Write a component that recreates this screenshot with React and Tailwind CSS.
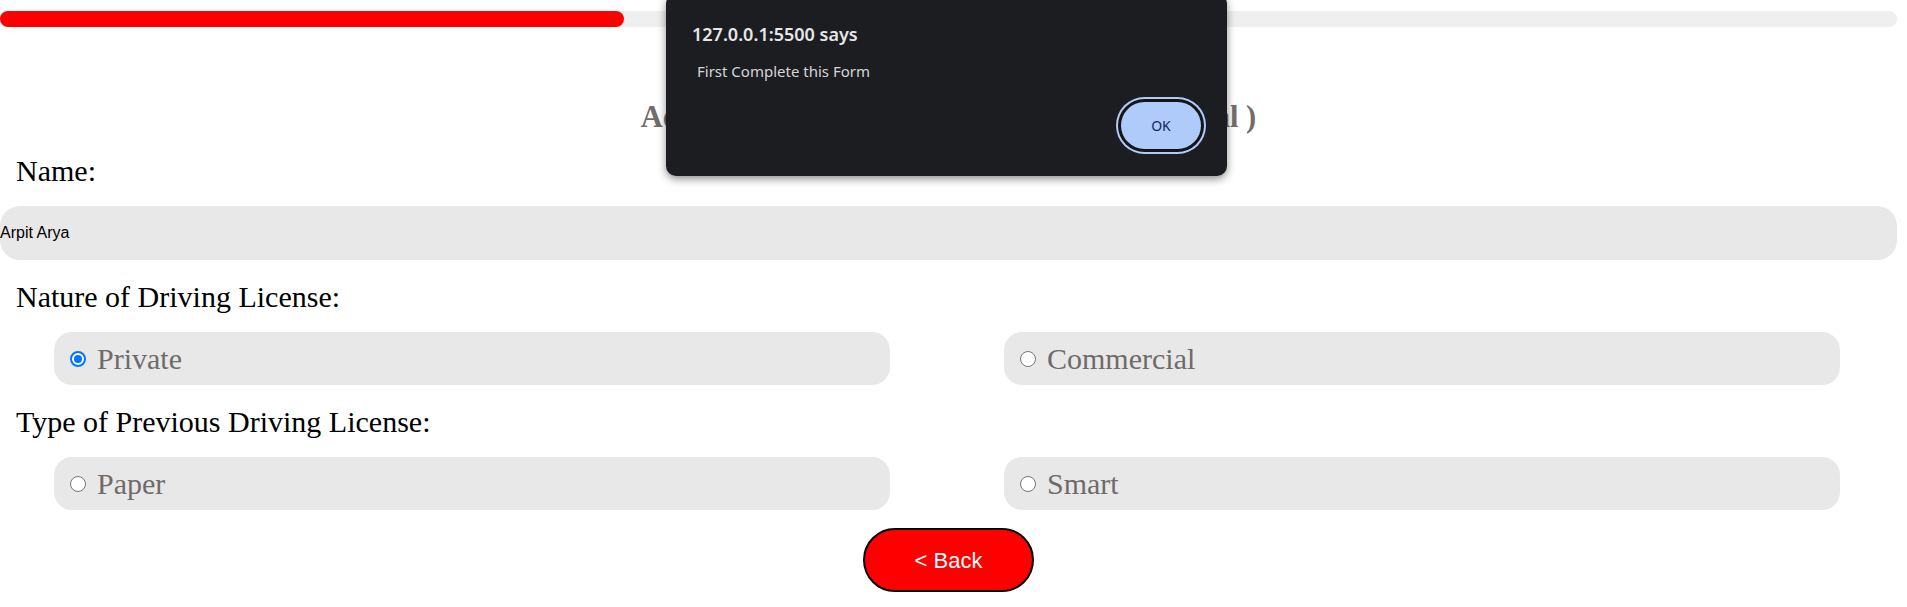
import React from "react";

const serif = { fontFamily: '"Liberation Serif", "Times New Roman", serif' };

const Radio = ({ checked }) =>
    checked ? (
        <span className="flex items-center justify-center w-4 h-4 rounded-full border-2 border-[#0075ff] bg-white shrink-0">
            <span className="w-2 h-2 rounded-full bg-[#0075ff]"></span>
        </span>
    ) : (
        <span className="w-4 h-4 rounded-full border border-[#767676] bg-white shrink-0"></span>
    );

const Option = ({ label, checked }) => (
    <div className="w-[836px] h-[53px] rounded-[18px] bg-[#e8e8e8] flex items-center pl-4 gap-[11px]">
        <Radio checked={checked} />
        <span className="text-[30px] leading-[34px] text-[#6f6b6a]">{label}</span>
    </div>
);

const App = () => {
    return (
        <div className="relative w-[1897px] min-h-[607px] bg-white" style={serif}>
            {/* progress */}
            <div className="pt-[11px]">
                <div className="h-4 w-full rounded-full bg-[#efefef]">
                    <div className="h-4 w-[624px] rounded-full bg-[#ff0000]"></div>
                </div>
            </div>

            <h2 className="mt-[73px] text-center text-[30.5px] leading-[34px] font-bold text-[#726c6a]">
                Address Change of Driving License ( Renewal )
            </h2>

            <div className="mt-5 px-4 text-[30px] leading-[34px] text-black">Name:</div>
            <input
                readOnly
                defaultValue="Arpit Arya"
                className="mt-[18px] block w-full h-[54px] rounded-[20px] bg-[#e8e8e8] px-0 text-[16px] text-black outline-none"
                style={{ fontFamily: '"Liberation Sans", Arial, sans-serif' }}
            />

            <div className="mt-5 px-4 text-[30px] leading-[34px] text-black">Nature of Driving License:</div>
            <div className="mt-[18px] flex pl-[54px] gap-[114px]">
                <Option label="Private" checked />
                <Option label="Commercial" />
            </div>

            <div className="mt-5 px-4 text-[30px] leading-[34px] text-black">Type of Previous Driving License:</div>
            <div className="mt-[18px] flex pl-[54px] gap-[114px]">
                <Option label="Paper" />
                <Option label="Smart" />
            </div>

            <div className="mt-[18px] flex justify-center">
                <button
                    className="w-[171px] h-16 rounded-full border-2 border-black bg-[#ff0000] text-white text-[22px]"
                    style={{ fontFamily: '"Liberation Sans", Arial, sans-serif' }}
                >
                    &lt; Back
                </button>
            </div>

            {/* browser alert */}
            <div
                className="absolute left-[666px] top-[-6px] w-[561px] h-[182px] rounded-[10px] bg-[#1c1d21] shadow-[0_3px_8px_rgba(0,0,0,0.45)] flex flex-col pt-7 px-[26px]"
                style={{ fontFamily: '"Noto Sans", "Open Sans", sans-serif' }}
            >
                <div className="text-[18px] leading-6 font-semibold text-[#e6e6e6]">127.0.0.1:5500 says</div>
                <div className="mt-[15px] pl-[5px] text-[15px] leading-5 text-[#d6d6d6]">First Complete this Form</div>
                <div className="mt-[21px] flex justify-end">
                    <button className="w-[80px] h-[47px] rounded-full bg-[#aecbfa] text-[#0b2a5c] text-[14px] shadow-[0_0_0_3px_#151515,0_0_0_5px_#aecbfa]">
                        OK
                    </button>
                </div>
            </div>
        </div>
    );
};

export default App;
